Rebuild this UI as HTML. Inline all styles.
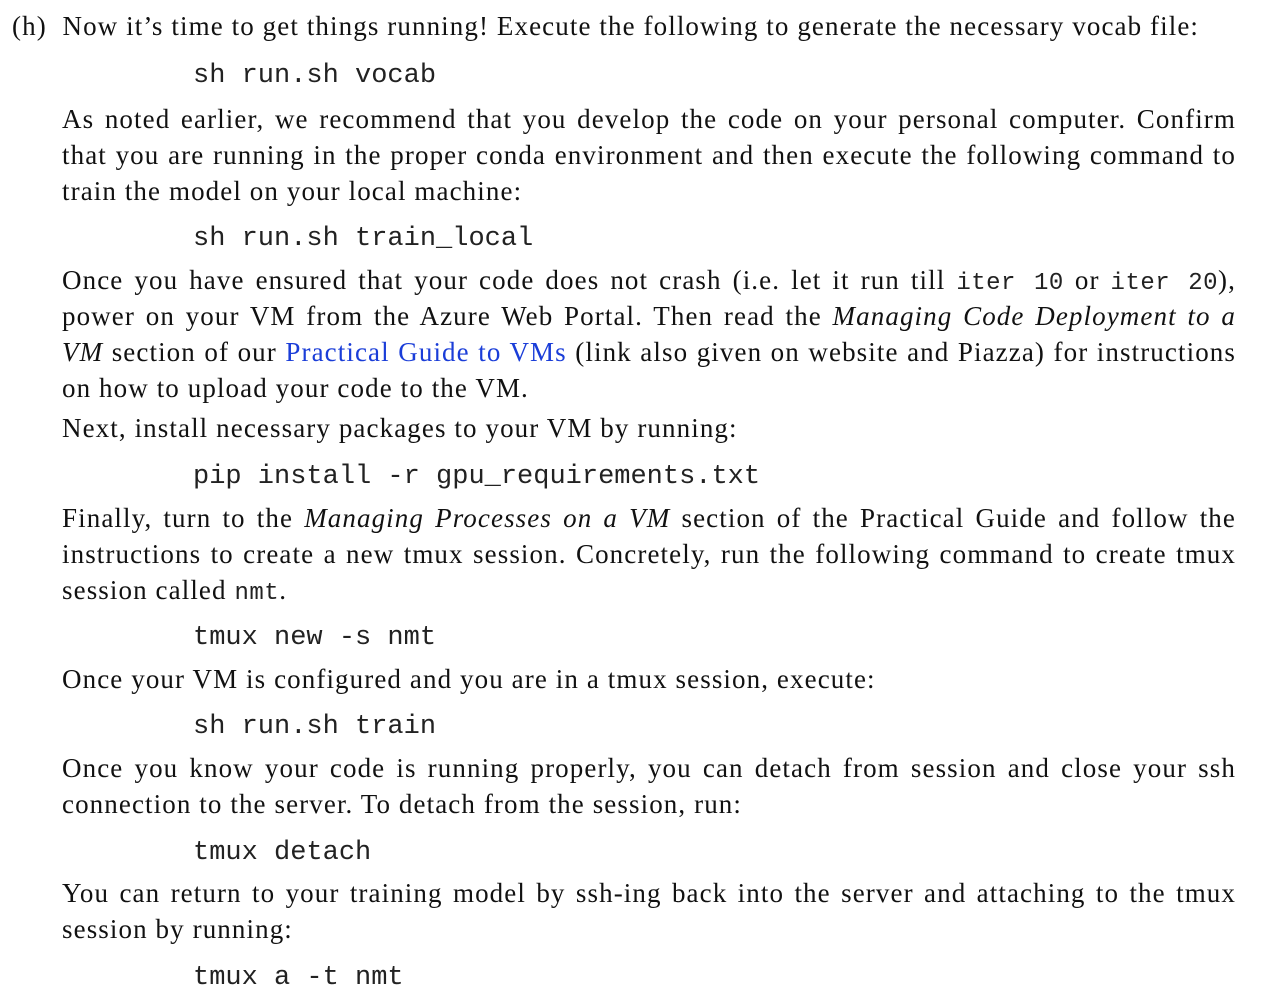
<!DOCTYPE html>
<html><head><meta charset="utf-8"><style>
body{margin:0;background:#fff;width:1264px;height:996px;position:relative;overflow:hidden;font-family:"Liberation Serif",serif;font-size:27px;letter-spacing:1.1px;color:#111}
.l{position:absolute;left:62px;width:1174px;white-space:nowrap;line-height:30px}
.j{text-align:justify;text-align-last:justify;white-space:normal}
.c{position:absolute;left:193px;font-family:"Liberation Mono",monospace;font-size:27px;letter-spacing:0;line-height:30px;white-space:pre;color:#222}
tt{font-family:"Liberation Mono",monospace;font-size:24px;letter-spacing:0.5px;color:#222}
a{color:#1a3dd8;text-decoration:none}
</style></head><body>
<div class="l" style="left:12px;top:11px">(h)&nbsp; Now it’s time to get things running! Execute the following to generate the necessary vocab file:</div>
<div class="c" style="top:61px">sh run.sh vocab</div>
<div class="l j" style="top:104px">As noted earlier, we recommend that you develop the code on your personal computer. Confirm</div>
<div class="l j" style="top:140px">that you are running in the proper conda environment and then execute the following command to</div>
<div class="l" style="top:176px">train the model on your local machine:</div>
<div class="c" style="top:224px">sh run.sh train_local</div>
<div class="l j" style="top:265px">Once you have ensured that your code does not crash (i.e. let it run till <tt>iter 10</tt> or <tt>iter 20</tt>),</div>
<div class="l j" style="top:301px">power on your VM from the Azure Web Portal. Then read the <i>Managing Code Deployment to a</i></div>
<div class="l j" style="top:337px"><i>VM</i> section of our <a>Practical Guide to VMs</a> (link also given on website and Piazza) for instructions</div>
<div class="l" style="top:373px">on how to upload your code to the VM.</div>
<div class="l" style="top:413px">Next, install necessary packages to your VM by running:</div>
<div class="c" style="top:462px">pip install -r gpu_requirements.txt</div>
<div class="l j" style="top:503px">Finally, turn to the <i>Managing Processes on a VM</i> section of the Practical Guide and follow the</div>
<div class="l j" style="top:539px">instructions to create a new tmux session. Concretely, run the following command to create tmux</div>
<div class="l" style="top:575px">session called <tt>nmt</tt>.</div>
<div class="c" style="top:623px">tmux new -s nmt</div>
<div class="l" style="top:664px">Once your VM is configured and you are in a tmux session, execute:</div>
<div class="c" style="top:712px">sh run.sh train</div>
<div class="l j" style="top:753px">Once you know your code is running properly, you can detach from session and close your ssh</div>
<div class="l" style="top:789px">connection to the server. To detach from the session, run:</div>
<div class="c" style="top:838px">tmux detach</div>
<div class="l j" style="top:878px">You can return to your training model by ssh-ing back into the server and attaching to the tmux</div>
<div class="l" style="top:914px">session by running:</div>
<div class="c" style="top:963px">tmux a -t nmt</div>
</body></html>
